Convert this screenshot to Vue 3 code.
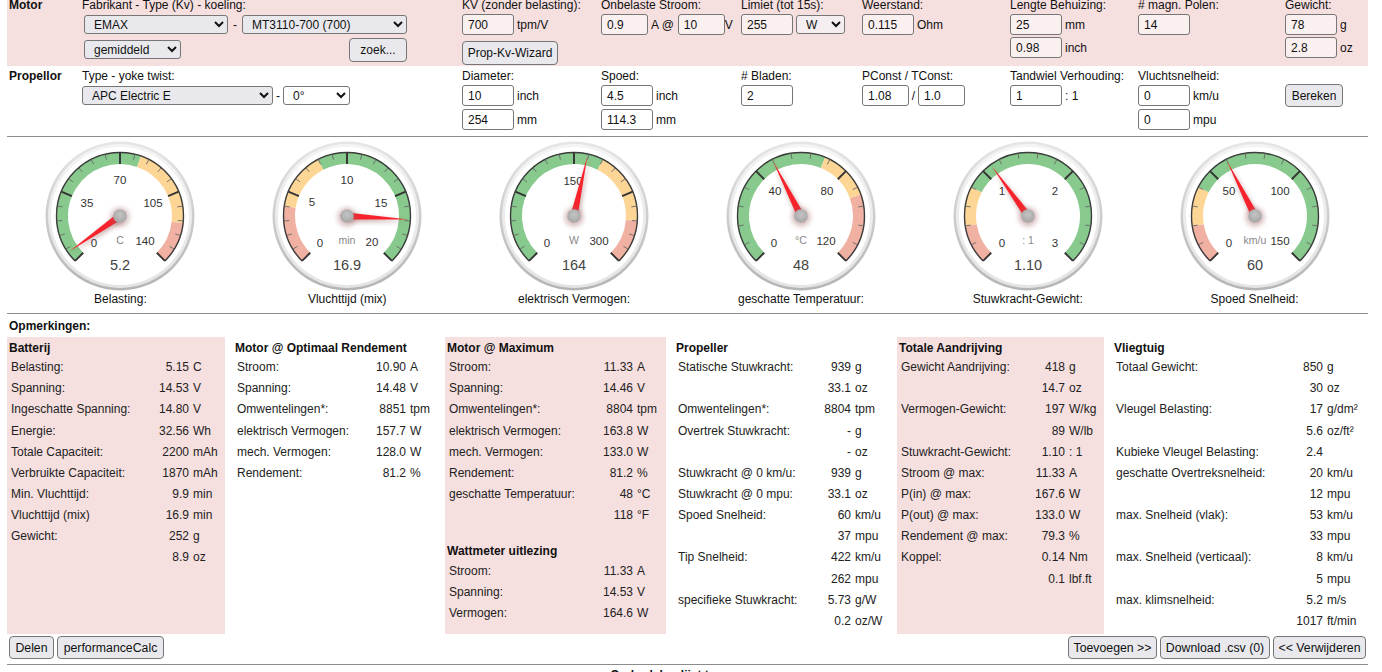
<script setup>
const toRad = (d) => (d * Math.PI) / 180
const pt = (r, deg) => ({ x: 80 + r * Math.sin(toRad(deg)), y: 79 - r * Math.cos(toRad(deg)) })
const f2a = (f) => -135 + 270 * f
const arc = (r, a, b) => {
  const s = pt(r, a)
  const e = pt(r, b)
  return `M${s.x.toFixed(2)} ${s.y.toFixed(2)} A${r} ${r} 0 ${b - a > 180 ? 1 : 0} 1 ${e.x.toFixed(2)} ${e.y.toFixed(2)}`
}
const G = '#88ca8d'
const Y = '#fdd696'
const R = '#f0b1a2'

const raw = [
  { name: 'Belasting:', value: '5.2', unit: 'C', frac: 5.15 / 140, majors: 4, bands: [[0.571, G], [0.857, Y], [1, R]],
    labels: [['0', -26, 27], ['35', -33, -13], ['70', 0, -36], ['105', 33, -13], ['140', 25, 25]] },
  { name: 'Vluchttijd (mix)', value: '16.9', unit: 'min', frac: 16.9 / 20, majors: 4, bands: [[0.2, R], [0.4, Y], [1, G]],
    labels: [['0', -27, 27], ['5', -35, -14], ['10', 0, -36], ['15', 34, -13], ['20', 25, 26]] },
  { name: 'elektrisch Vermogen:', value: '164', unit: 'W', frac: 164 / 300, majors: 4, bands: [[0.6, G], [0.85, Y], [1, R]],
    labels: [['0', -27, 27], ['150', -1, -35], ['300', 25, 25]] },
  { name: 'geschatte Temperatuur:', value: '48', unit: '°C', frac: 48 / 120, majors: 3, bands: [[0.583, G], [0.76, Y], [1, R]],
    labels: [['0', -27, 27], ['40', -26, -25], ['80', 26, -25], ['120', 25, 25]] },
  { name: 'Stuwkracht-Gewicht:', value: '1.10', unit: ': 1', frac: 1.1 / 3, majors: 3, bands: [[0.133, R], [0.267, Y], [1, G]],
    labels: [['0', -26, 27], ['1', -26, -25], ['2', 27, -25], ['3', 27, 27]] },
  { name: 'Spoed Snelheid:', value: '60', unit: 'km/u', frac: 60 / 150, majors: 3, bands: [[0.133, R], [0.267, Y], [1, G]],
    labels: [['0', -26, 27], ['50', -26, -25], ['100', 25, -25], ['150', 25, 25]] },
]

const gauges = raw.map((g, gi) => {
  let prev = 0
  const bands = g.bands.map(([end, color]) => {
    const d = arc(58, f2a(prev), f2a(end))
    prev = end
    return { d, color }
  })
  const minors = []
  const majors = []
  const total = g.majors * 5
  for (let i = 0; i <= total; i++) {
    const a = f2a(i / total)
    const o = pt(63.5, a)
    if (i % 5 === 0) {
      const n = pt(52, a)
      majors.push({ x1: o.x, y1: o.y, x2: n.x, y2: n.y })
    } else {
      const n = pt(58, a)
      minors.push({ x1: o.x, y1: o.y, x2: n.x, y2: n.y })
    }
  }
  const a = f2a(g.frac)
  const tip = pt(61.5, a)
  const l = pt(3.6, a - 90)
  const r = pt(3.6, a + 90)
  const t1 = pt(8, a + 180)
  const t2 = pt(1.2, a - 90)
  const t3 = pt(1.2, a + 90)
  const needle = `${tip.x},${tip.y} ${l.x},${l.y} ${r.x},${r.y}`
  const tail = `${t1.x},${t1.y} ${t2.x},${t2.y} ${t3.x},${t3.y}`
  return { ...g, id: gi, bands, minors, majors, needle, tail, outline: arc(63.5, -135, 135) }
})

const sections = [
  {
    cls: 'c1', pink: true,
    groups: [{ title: 'Batterij', rows: [
      ['Belasting:', '5.15', 'C'], ['Spanning:', '14.53', 'V'], ['Ingeschatte Spanning:', '14.80', 'V'],
      ['Energie:', '32.56', 'Wh'], ['Totale Capaciteit:', '2200', 'mAh'], ['Verbruikte Capaciteit:', '1870', 'mAh'],
      ['Min. Vluchttijd:', '9.9', 'min'], ['Vluchttijd (mix)', '16.9', 'min'], ['Gewicht:', '252', 'g'], ['', '8.9', 'oz'],
    ] }],
  },
  {
    cls: 'c2', pink: false,
    groups: [{ title: 'Motor @ Optimaal Rendement', rows: [
      ['Stroom:', '10.90', 'A'], ['Spanning:', '14.48', 'V'], ['Omwentelingen*:', '8851', 'tpm'],
      ['elektrisch Vermogen:', '157.7', 'W'], ['mech. Vermogen:', '128.0', 'W'], ['Rendement:', '81.2', '%'],
    ] }],
  },
  {
    cls: 'c3', pink: true,
    groups: [
      { title: 'Motor @ Maximum', rows: [
        ['Stroom:', '11.33', 'A'], ['Spanning:', '14.46', 'V'], ['Omwentelingen*:', '8804', 'tpm'],
        ['elektrisch Vermogen:', '163.8', 'W'], ['mech. Vermogen:', '133.0', 'W'], ['Rendement:', '81.2', '%'],
        ['geschatte Temperatuur:', '48', '°C'], ['', '118', '°F'],
      ] },
      { title: 'Wattmeter uitlezing', second: true, rows: [
        ['Stroom:', '11.33', 'A'], ['Spanning:', '14.53', 'V'], ['Vermogen:', '164.6', 'W'],
      ] },
    ],
  },
  {
    cls: 'c4', pink: false,
    groups: [{ title: 'Propeller', rows: [
      ['Statische Stuwkracht:', '939', 'g'], ['', '33.1', 'oz'], ['Omwentelingen*:', '8804', 'tpm'],
      ['Overtrek Stuwkracht:', '-', 'g'], ['', '-', 'oz'], ['Stuwkracht @ 0 km/u:', '939', 'g'],
      ['Stuwkracht @ 0 mpu:', '33.1', 'oz'], ['Spoed Snelheid:', '60', 'km/u'], ['', '37', 'mpu'],
      ['Tip Snelheid:', '422', 'km/u'], ['', '262', 'mpu'], ['specifieke Stuwkracht:', '5.73', 'g/W'], ['', '0.2', 'oz/W'],
    ] }],
  },
  {
    cls: 'c5', pink: true,
    groups: [{ title: 'Totale Aandrijving', rows: [
      ['Gewicht Aandrijving:', '418', 'g'], ['', '14.7', 'oz'], ['Vermogen-Gewicht:', '197', 'W/kg'],
      ['', '89', 'W/lb'], ['Stuwkracht-Gewicht:', '1.10', ': 1'], ['Stroom @ max:', '11.33', 'A'],
      ['P(in) @ max:', '167.6', 'W'], ['P(out) @ max:', '133.0', 'W'], ['Rendement @ max:', '79.3', '%'],
      ['Koppel:', '0.14', 'Nm'], ['', '0.1', 'lbf.ft'],
    ] }],
  },
  {
    cls: 'c6', pink: false,
    groups: [{ title: 'Vliegtuig', rows: [
      ['Totaal Gewicht:', '850', 'g'], ['', '30', 'oz'], ['Vleugel Belasting:', '17', 'g/dm²'],
      ['', '5.6', 'oz/ft²'], ['Kubieke Vleugel Belasting:', '2.4', ''], ['geschatte Overtreksnelheid:', '20', 'km/u'],
      ['', '12', 'mpu'], ['max. Snelheid (vlak):', '53', 'km/u'], ['', '33', 'mpu'],
      ['max. Snelheid (verticaal):', '8', 'km/u'], ['', '5', 'mpu'], ['max. klimsnelheid:', '5.2', 'm/s'], ['', '1017', 'ft/min'],
    ] }],
  },
]
</script>

<template>
  <div class="page">
    <section class="formrow motor">
      <b class="rowname">Motor</b>
      <div class="cell">
        <span class="lbl">Fabrikant - Type (Kv) - koeling:</span>
        <div class="inrow indent">
          <select class="s-brand"><option>EMAX</option></select>
          <span class="dash">-</span>
          <select class="s-type"><option>MT3110-700 (700)</option></select>
        </div>
        <div class="inrow indent between">
          <select class="s-cool"><option>gemiddeld</option></select>
          <button class="b-zoek narrow">zoek...</button>
        </div>
      </div>
      <div class="cell">
        <span class="lbl">KV (zonder belasting):</span>
        <div class="inrow"><input value="700" /><span class="after">tpm/V</span></div>
        <div class="inrow"><button class="b-wizard">Prop-Kv-Wizard</button></div>
      </div>
      <div class="cell">
        <span class="lbl">Onbelaste Stroom:</span>
        <div class="inrow"><input class="short" value="0.9" /><span class="after">A @</span><input class="short next" value="10" /><span class="tight">V</span></div>
      </div>
      <div class="cell">
        <span class="lbl">Limiet (tot 15s):</span>
        <div class="inrow"><input value="255" /><select class="s-unit"><option>W</option></select></div>
      </div>
      <div class="cell">
        <span class="lbl">Weerstand:</span>
        <div class="inrow"><input value="0.115" /><span class="after">Ohm</span></div>
      </div>
      <div class="cell">
        <span class="lbl">Lengte Behuizing:</span>
        <div class="inrow"><input value="25" /><span class="after">mm</span></div>
        <div class="inrow"><input value="0.98" /><span class="after">inch</span></div>
      </div>
      <div class="cell">
        <span class="lbl"># magn. Polen:</span>
        <div class="inrow"><input value="14" /></div>
      </div>
      <div class="cell">
        <span class="lbl">Gewicht:</span>
        <div class="inrow"><input value="78" /><span class="after">g</span></div>
        <div class="inrow"><input value="2.8" /><span class="after">oz</span></div>
      </div>
    </section>

    <section class="formrow prop">
      <b class="rowname">Propellor</b>
      <div class="cell">
        <span class="lbl">Type - yoke twist:</span>
        <div class="inrow">
          <select class="s-prop"><option>APC Electric E</option></select>
          <span class="dash small">-</span>
          <select class="s-twist"><option>0°</option></select>
        </div>
      </div>
      <div class="cell">
        <span class="lbl">Diameter:</span>
        <div class="inrow"><input value="10" /><span class="after">inch</span></div>
        <div class="inrow"><input value="254" /><span class="after">mm</span></div>
      </div>
      <div class="cell">
        <span class="lbl">Spoed:</span>
        <div class="inrow"><input value="4.5" /><span class="after">inch</span></div>
        <div class="inrow"><input value="114.3" /><span class="after">mm</span></div>
      </div>
      <div class="cell">
        <span class="lbl"># Bladen:</span>
        <div class="inrow"><input value="2" /></div>
      </div>
      <div class="cell">
        <span class="lbl">PConst / TConst:</span>
        <div class="inrow"><input class="short" value="1.08" /><span class="slash">/</span><input class="short" value="1.0" /></div>
      </div>
      <div class="cell">
        <span class="lbl">Tandwiel Verhouding:</span>
        <div class="inrow"><input value="1" /><span class="after">: 1</span></div>
      </div>
      <div class="cell">
        <span class="lbl">Vluchtsnelheid:</span>
        <div class="inrow"><input value="0" /><span class="after">km/u</span></div>
        <div class="inrow"><input value="0" /><span class="after">mpu</span></div>
      </div>
      <div class="cell">
        <span class="lbl"></span>
        <div class="inrow"><button class="b-calc narrow">Bereken</button></div>
      </div>
    </section>

    <hr />

    <section class="gauges">
      <figure v-for="g in gauges" :key="g.id" class="gauge">
        <svg width="160" height="155" viewBox="0 0 160 155">
          <defs>
            <linearGradient :id="`ringA${g.id}`" x1="0" y1="0" x2="0" y2="1">
              <stop offset="0" stop-color="#e6e6e6" />
              <stop offset="1" stop-color="#b4b4b4" />
            </linearGradient>
            <linearGradient :id="`ringB${g.id}`" x1="0" y1="0" x2="0" y2="1">
              <stop offset="0" stop-color="#f4f4f4" />
              <stop offset="1" stop-color="#e4e4e4" />
            </linearGradient>
            <radialGradient :id="`hub${g.id}`" cx="0.5" cy="0.4" r="0.6">
              <stop offset="0" stop-color="#c4c4c4" />
              <stop offset="1" stop-color="#a6a6a6" />
            </radialGradient>
            <filter :id="`soft${g.id}`" x="-50%" y="-50%" width="200%" height="200%">
              <feGaussianBlur stdDeviation="2.4" />
            </filter>
          </defs>
          <circle cx="80" cy="79" r="74.5" :fill="`url(#ringA${g.id})`" />
          <circle cx="80" cy="79" r="72" :fill="`url(#ringB${g.id})`" />
          <circle cx="80" cy="79" r="69" fill="#fff" />
          <path v-for="(b, i) in g.bands" :key="i" :d="b.d" :stroke="b.color" stroke-width="12" fill="none" />
          <path :d="g.outline" stroke="#3c3c3c" stroke-width="1.4" fill="none" />
          <line v-for="(t, i) in g.minors" :key="`m${i}`" :x1="t.x1" :y1="t.y1" :x2="t.x2" :y2="t.y2" stroke="#666" stroke-width="0.9" />
          <line v-for="(t, i) in g.majors" :key="`M${i}`" :x1="t.x1" :y1="t.y1" :x2="t.x2" :y2="t.y2" stroke="#333" stroke-width="1.9" />
          <text v-for="l in g.labels" :key="l[0]" class="tick" :x="80 + l[1]" :y="79 + l[2] + 3.5" text-anchor="middle">{{ l[0] }}</text>
          <text class="unit" x="80" y="107" text-anchor="middle">{{ g.unit }}</text>
          <text class="val" x="80" y="133" text-anchor="middle">{{ g.value }}</text>
          <polygon :points="g.needle" fill="#7a3030" opacity="0.45" :filter="`url(#soft${g.id})`" transform="translate(1 2)" />
          <polygon :points="g.needle" fill="#f8222c" />
          <polygon :points="g.tail" fill="#f8222c" />
          <circle cx="80" cy="80" r="9.5" fill="#a06060" opacity="0.4" :filter="`url(#soft${g.id})`" />
          <circle cx="80" cy="79" r="6.8" :fill="`url(#hub${g.id})`" />
        </svg>
        <figcaption>{{ g.name }}</figcaption>
      </figure>
    </section>

    <hr />

    <b class="remarks">Opmerkingen:</b>

    <section class="results">
      <div v-for="s in sections" :key="s.cls" class="col" :class="[s.cls, { pink: s.pink }]">
        <template v-for="grp in s.groups" :key="grp.title">
          <h4 :class="{ second: grp.second }">{{ grp.title }}</h4>
          <div v-for="(r, i) in grp.rows" :key="i" class="res" :class="{ tall: i === 3 || i === 10 }">
            <span class="k">{{ r[0] }}</span>
            <span class="n">{{ r[1] }}</span>
            <span class="u">{{ r[2] }}</span>
          </div>
        </template>
      </div>
    </section>

    <section class="actions">
      <div class="btns">
        <button class="b-delen">Delen</button>
        <button class="b-perf">performanceCalc</button>
      </div>
      <div class="btns">
        <button class="b-add">Toevoegen &gt;&gt;</button>
        <button class="b-csv">Download .csv (0)</button>
        <button class="b-del">&lt;&lt; Verwijderen</button>
      </div>
    </section>

    <hr class="last" />
    <b class="bottomline">Onderdelen-lijst toevoegen</b>
  </div>
</template>

<style scoped>
.page {
  width: 1382px;
  box-sizing: border-box;
  padding: 0 14px 0 7px;
  margin-top: -2px;
  font: 12px/14px "Liberation Sans", Arial, sans-serif;
  color: #111;
}
.formrow {
  display: grid;
  grid-template-columns: 75px 380px 139px 140px 121px 148px 128px 147px 83px;
  box-sizing: border-box;
}
.motor {
  height: 68px;
  background: #f6dfdf;
}
.prop {
  height: 66px;
  padding-top: 3px;
}
.rowname {
  padding-left: 2px;
}
.cell {
  display: flex;
  flex-direction: column;
  gap: 3px;
  min-width: 0;
}
.motor .cell {
  gap: 2px;
}
.prop .lbl {
  margin-bottom: -1px;
}
.lbl {
  height: 14px;
  white-space: nowrap;
}
.inrow {
  display: flex;
  align-items: center;
  height: 21px;
}
.indent {
  padding-left: 2px;
  width: 323px;
}
.between {
  justify-content: space-between;
  align-items: flex-start;
}
input {
  width: 52px;
  height: 21px;
  box-sizing: border-box;
  padding: 0 0 0 5px;
  border: 1px solid #767676;
  border-radius: 3px;
  background: #fff;
  color: #111;
  font: 12px "Liberation Sans", Arial, sans-serif;
}
.motor input {
  background: #fbf0f0;
}
input.short {
  width: 47px;
}
input.next {
  margin-left: 4px;
}
.after {
  margin-left: 3px;
  white-space: nowrap;
}
.slash {
  width: 9px;
  text-align: center;
}
select {
  height: 19px;
  box-sizing: border-box;
  padding: 0 0 0 5px;
  border: 1px solid #767676;
  border-radius: 3px;
  background-color: #e9e9ed;
  color: #111;
  font: 12px "Liberation Sans", Arial, sans-serif;
}
.s-brand { width: 144px; }
.s-type { width: 165px; }
.s-cool { width: 97px; margin-top: 3px; }
.s-unit { width: 49px; margin-left: 3px; background-color: #f4eef0; }
.s-prop { width: 191px; }
.s-twist { width: 67px; background-color: #fff; }
.dash {
  width: 14px;
  text-align: center;
}
.dash.small {
  width: 10px;
}
button {
  box-sizing: border-box;
  height: 23px;
  padding: 0;
  border: 1px solid #767676;
  border-radius: 4px;
  background: #e9e9ed;
  color: #111;
  font: 12.3px "Liberation Sans", Arial, sans-serif;
  white-space: nowrap;
}
button.narrow {
  font-size: 12px;
}
.b-zoek { width: 58px; height: 24px; margin-top: 1px; }
.b-wizard { width: 96px; height: 24px; font-size: 12px; align-self: flex-start; margin-top: 4px; }
.b-calc { width: 58px; }
hr {
  height: 1px;
  margin: 4px 0 0;
  border: 0;
  background: #8c8c8c;
}
.gauges {
  display: grid;
  grid-template-columns: repeat(6, 1fr);
  height: 176px;
}
.gauge {
  margin: 0;
  text-align: center;
}
.gauge svg {
  display: block;
  margin: 0 auto;
}
figcaption {
  height: 14px;
}
.tick {
  font: 11.5px "Liberation Sans", Arial, sans-serif;
  fill: #333;
}
.unit {
  font: 10.5px "Liberation Sans", Arial, sans-serif;
  fill: #888;
}
.val {
  font: 14.5px "Liberation Sans", Arial, sans-serif;
  fill: #444;
}
.gauges + hr {
  margin-top: 0;
}
.remarks {
  display: block;
  padding: 5px 0 4px 2px;
}
.results {
  display: grid;
  grid-template-columns: 218px 220px 221px 231px 207px 264px;
}
.col {
  box-sizing: border-box;
  padding: 4px 0 2px 8px;
  min-width: 0;
}
.col.pink {
  padding-left: 0;
  background: #f6dfdf;
}
h4 {
  margin: 0;
  padding-left: 2px;
  height: 16px;
  font: bold 12px/14px "Liberation Sans", Arial, sans-serif;
}
h4.second {
  margin-top: 18px;
  height: 17px;
}
.res {
  display: grid;
  grid-template-columns: var(--lab) 50px 1fr;
  height: 21px;
  padding-left: 4px;
  line-height: 21px;
  white-space: nowrap;
  color: #222;
}
.res.tall {
  height: 22px;
  line-height: 23px;
}
.c1 { --lab: 128px; }
.c2 { --lab: 119px; }
.c3 { --lab: 134px; }
.c4 { --lab: 123px; }
.c5 { --lab: 114px; }
.c6 { --lab: 157px; }
.n {
  text-align: right;
}
.u {
  padding-left: 4px;
}
.actions {
  display: flex;
  justify-content: space-between;
  padding: 2px 2px 0;
}
.btns {
  display: flex;
  gap: 3px;
}
.b-delen { width: 45px; }
.b-perf { width: 107px; }
.b-add { width: 89px; }
.b-csv { width: 110px; }
.b-del { width: 93px; }
hr.last {
  margin-top: 5px;
}
.bottomline {
  display: block;
  margin-top: 3px;
  text-align: center;
  height: 14px;
}
</style>

<style>
html, body {
  margin: 0;
  background: #fff;
}
</style>
